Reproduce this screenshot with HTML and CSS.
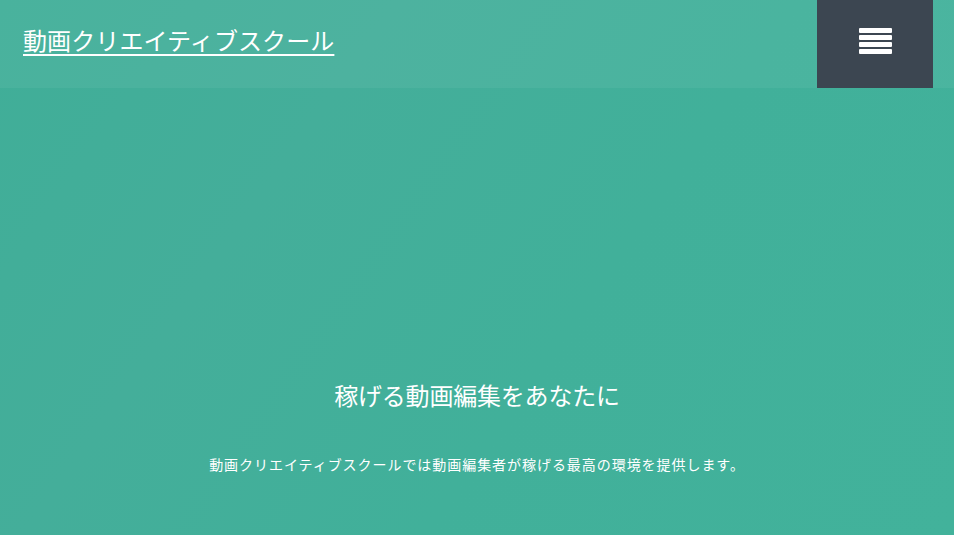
FILE: index.html
```html
<!DOCTYPE html>
<html lang="ja">
<head>
<meta charset="utf-8">
<title>動画クリエイティブスクール</title>
<link rel="stylesheet" href="styles.css">
</head>
<body>
<div class="page">
  <header class="header">
    <a class="logo" href="#">動画クリエイティブスクール</a>
    <button class="menu-btn" aria-label="メニュー">
      <span class="bar"></span><span class="bar"></span><span class="bar"></span><span class="bar"></span>
    </button>
  </header>
  <main class="hero">
    <h1 class="hero-title">稼げる動画編集をあなたに</h1>
    <p class="hero-text">動画クリエイティブスクールでは動画編集者が稼げる最高の環境を提供します。</p>
  </main>
</div>
</body>
</html>
```
FILE: styles.css
```css
html, body {
  margin: 0;
  padding: 0;
  height: 100%;
}
body {
  background: #42b09a;
  font-family: "Noto Sans CJK JP", "Noto Sans", sans-serif;
  color: #ffffff;
  overflow: hidden;
}
.page {
  min-height: 535px;
  display: flex;
  flex-direction: column;
  background: linear-gradient(125deg, #40ae98 0%, #44ae9a 30%, #41b09a 60%, #42b29b 100%);
}
.header {
  height: 88px;
  display: flex;
  align-items: stretch;
  justify-content: space-between;
  background: rgba(255, 255, 255, 0.05);
  padding: 0 21px 0 23px;
}
.logo {
  align-self: center;
  color: #ffffff;
  font-size: 24px;
  line-height: 1;
  text-decoration: underline;
  text-underline-offset: 4px;
  text-decoration-thickness: 2px;
  margin-top: -8px;
  letter-spacing: 0.1px;
}
.menu-btn {
  width: 116px;
  border: none;
  background: #3c4651;
  display: flex;
  flex-direction: column;
  align-items: center;
  justify-content: center;
  gap: 2px;
  padding: 0 0 6px 0;
  cursor: pointer;
}
.bar {
  display: block;
  width: 33px;
  height: 5px;
  background: #ffffff;
  border-radius: 1px;
}
.hero {
  flex: 1;
  display: flex;
  flex-direction: column;
  align-items: center;
  padding-top: 289px;
}
.hero-title {
  margin: 0;
  font-size: 24px;
  font-weight: 400;
  line-height: 36px;
  letter-spacing: -0.2px;
}
.hero-text {
  margin: 41px 0 0 0;
  font-size: 14px;
  line-height: 20px;
  letter-spacing: 0.95px;
}
```
